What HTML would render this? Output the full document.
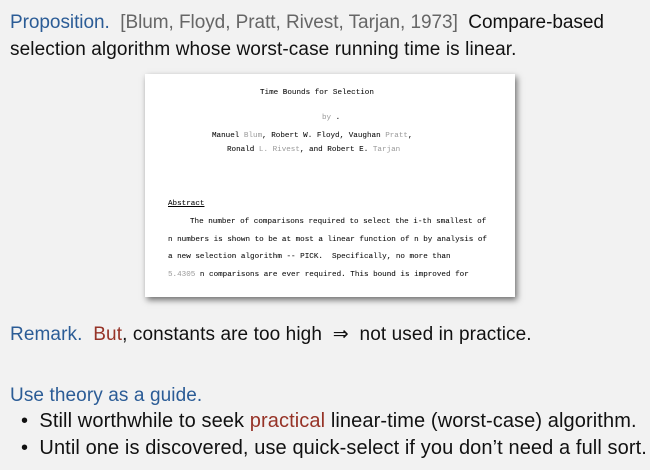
<!DOCTYPE html>
<html><head><meta charset="utf-8"><style>
body{margin:0;width:650px;height:470px;background:#f2f2f2;position:relative;overflow:hidden;font-family:"Liberation Sans",sans-serif;font-size:19px;color:#111;letter-spacing:0.1px}
.l{position:absolute;white-space:nowrap}
.b{color:#2b5c96}.g{color:#666}.r{color:#963327}
.paper{position:absolute;left:145px;top:74px;width:370px;height:223px;background:#fff;box-shadow:2px 3px 6px rgba(0,0,0,.55);font-family:"Liberation Mono",monospace;font-size:7.6px;color:#111;letter-spacing:0;-webkit-text-stroke:0.08px #000}
.paper div{position:absolute;white-space:nowrap}
.f{color:#999;-webkit-text-stroke:0}
</style></head><body>
<div class="l" style="left:10px;top:12px;letter-spacing:-0.05px"><span class="b">Proposition.</span>&nbsp; <span class="g">[Blum, Floyd, Pratt, Rivest, Tarjan, 1973]</span>&nbsp; Compare-based</div>
<div class="l" style="left:10px;top:39px">selection algorithm whose worst-case running time is linear.</div>
<div class="paper">
<div style="left:115px;top:15px">Time Bounds for Selection</div>
<div style="left:177px;top:40px"><span class="f">by</span> .</div>
<div style="left:67px;top:58px">Manuel <span class="f">Blum</span>, Robert W. Floyd, Vaughan <span class="f">Pratt</span>,</div>
<div style="left:82px;top:72px">Ronald <span class="f">L. Rivest</span>, and Robert E. <span class="f">Tarjan</span></div>
<div style="left:23px;top:126px;text-decoration:underline">Abstract </div>
<div style="left:45px;top:144px">The number of comparisons required to select the i-th smallest of</div>
<div style="left:23px;top:162px">n numbers is shown to be at most a linear function of n by analysis of</div>
<div style="left:23px;top:179px">a new selection algorithm -- PICK.&nbsp; Specifically, no more than</div>
<div style="left:23px;top:197px"><span class="f">5.4305</span> n comparisons are ever required. This bound is improved for</div>
</div>
<div class="l" style="left:10px;top:323px"><span class="b">Remark.</span>&nbsp; <span class="r">But</span>, constants are too high &nbsp;⇒&nbsp; not used in practice.</div>
<div class="l b" style="left:10px;top:385px">Use theory as a guide.</div>
<div class="l" style="left:21px;top:410px;font-size:20px">•&nbsp; Still worthwhile to seek <span class="r">practical</span> linear-time (worst-case) algorithm.</div>
<div class="l" style="left:21px;top:437px;font-size:20px">•&nbsp; Until one is discovered, use quick-select if you don’t need a full sort.</div>
</body></html>
